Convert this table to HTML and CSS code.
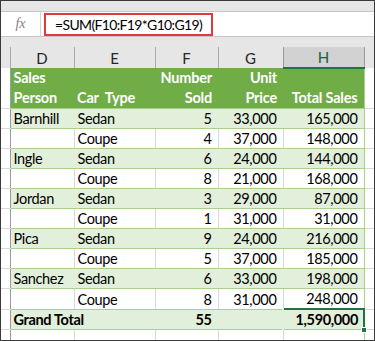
FILE: index.html
```html
<!DOCTYPE html>
<html lang="en">

<head>
    <meta charset="UTF-8">
    <meta name="viewport" content="width=device-width, initial-scale=1.0">
    <title>SUM of products</title>
    <link rel="stylesheet" href="styles.css">
</head>

<body>
    <div class="sheet">
        <div class="ribbon"></div>
        <div class="formula__bar">
            <span class="fx">fx</span>
            <div class="formula">=SUM(F10:F19*G10:G19)</div>
        </div>
        <div class="gap"></div>
        <table class="grid">
            <colgroup>
                <col class="c-gutter">
                <col class="c-d">
                <col class="c-e">
                <col class="c-f">
                <col class="c-g">
                <col class="c-h">
                <col class="c-rest">
            </colgroup>
            <thead>
                <tr class="letters">
                    <th class="gutter"></th>
                    <th>D</th>
                    <th>E</th>
                    <th>F</th>
                    <th>G</th>
                    <th class="selected">H</th>
                    <th class="rest"></th>
                </tr>
            </thead>
            <tbody>
                <tr class="head">
                    <td class="gutter"></td>
                    <td>Sales<br>Person</td>
                    <td class="bottom">Car&nbsp; Type</td>
                    <td class="num">Number<br>Sold</td>
                    <td class="num">Unit<br>Price</td>
                    <td class="num bottom">Total Sales</td>
                    <td class="rest"></td>
                </tr>
            </tbody>
            <tbody id="rows"></tbody>
            <tbody>
                <tr class="band total">
                    <td class="gutter"></td>
                    <td colspan="2">Grand Total</td>
                    <td class="num">55</td>
                    <td></td>
                    <td class="num active"><span class="handle"></span>1,590,000</td>
                    <td class="rest"></td>
                </tr>
                <tr class="empty">
                    <td class="gutter"></td>
                    <td></td>
                    <td></td>
                    <td></td>
                    <td></td>
                    <td></td>
                    <td class="rest"></td>
                </tr>
            </tbody>
        </table>
    </div>
    <script>
        // Sales data
const sales = [
  ['Barnhill', 'Sedan', 5, 33000],
  ['', 'Coupe', 4, 37000],
  ['Ingle', 'Sedan', 6, 24000],
  ['', 'Coupe', 8, 21000],
  ['Jordan', 'Sedan', 3, 29000],
  ['', 'Coupe', 1, 31000],
  ['Pica', 'Sedan', 9, 24000],
  ['', 'Coupe', 5, 37000],
  ['Sanchez', 'Sedan', 6, 33000],
  ['', 'Coupe', 8, 31000]
];

const rowsDOM = document.getElementById('rows');
const fmt = (n) => n.toLocaleString('en-US');

sales.forEach((row, i) => {
  const [person, car, sold, price] = row;
  const tr = document.createElement('tr');
  if (i % 2 === 0) tr.className = 'band';
  tr.innerHTML =
    '<td class="gutter"></td>' +
    '<td>' + person + '</td>' +
    '<td>' + car + '</td>' +
    '<td class="num">' + sold + '</td>' +
    '<td class="num">' + fmt(price) + '</td>' +
    '<td class="num">' + fmt(sold * price) + '</td>' +
    '<td class="rest"></td>';
  rowsDOM.appendChild(tr);
});
    </script>
</body>

</html>
```

FILE: styles.css
```css
* {
  margin: 0;
  padding: 0;
  box-sizing: border-box;
}

body {
  width: 375px;
  height: 341px;
  overflow: hidden;
  background-color: #ffffff;
  font-family: 'Lato', 'Liberation Sans', sans-serif;
}

.sheet {
  width: 375px;
  height: 341px;
  border: 1px solid #3a3a3a;
  overflow: hidden;
  background-color: #ffffff;
}

.ribbon {
  height: 11px;
  background-color: #e6e6e6;
  border-bottom: 1px solid #c6c6c6;
}

.formula__bar {
  height: 25px;
  display: flex;
  align-items: center;
  border-bottom: 1px solid #c6c6c6;
}

.fx {
  width: 40px;
  height: 100%;
  display: flex;
  align-items: center;
  justify-content: center;
  border-right: 1px solid #d4d4d4;
  font-family: 'Liberation Serif', serif;
  font-style: italic;
  font-size: 14px;
  color: #808080;
}

.formula {
  margin-left: 3px;
  width: 169px;
  height: 23px;
  border: 2px solid #e0393e;
  padding-left: 9px;
  font-size: 14px;
  letter-spacing: -0.65px;
  line-height: 19px;
  color: #000000;
}

.gap {
  height: 10px;
  background-color: #e6e6e6;
}

.grid {
  width: 373px;
  table-layout: fixed;
  border-collapse: collapse;
  font-size: 14.5px;
  letter-spacing: -0.35px;
  color: #000000;
}

.c-gutter { width: 9px; }
.c-d { width: 64px; }
.c-e { width: 81px; }
.c-f { width: 63px; }
.c-g { width: 65px; }
.c-h { width: 81px; }
.c-rest { width: 10px; }

.letters th {
  height: 21px;
  background-color: #e6e6e6;
  border-left: 1px solid #ababab;
  font-weight: normal;
  font-size: 15px;
  letter-spacing: 0;
  color: #262626;
  text-align: center;
  vertical-align: middle;
}

.letters th.gutter {
  border-left: none;
}

.letters th.selected {
  background-color: #d2d2d2;
  border-left: 1px solid #9b9b9b;
  border-right: 1px solid #9b9b9b;
  border-bottom: 2px solid #217346;
  color: #1d5e38;
}

.letters th.rest {
  border-left: none;
}

td {
  height: 20px;
  padding: 0 3px;
  white-space: nowrap;
  line-height: 19px;
  border-bottom: 1px solid #d9d9d9;
  border-left: 1px solid #d9d9d9;
  vertical-align: bottom;
}

td.num {
  text-align: right;
  padding-right: 6px;
}

td.gutter {
  border-left: none;
  border-right: 1px solid #9b9b9b;
  background-color: #ffffff;
}

td.rest {
  border-left: 1px solid #a9d08e;
}

.head td {
  height: 40px;
  background-color: #70ad47;
  color: #ffffff;
  font-weight: bold;
  letter-spacing: -0.2px;
  border-left: none;
  border-bottom: 1px solid #a9d08e;
  line-height: 20px;
  vertical-align: middle;
}

.head td.gutter {
  background-color: #ffffff;
  border-right: 1px solid #9b9b9b;
  border-bottom: 1px solid #d9d9d9;
}

.head td.rest {
  background-color: #ffffff;
  border-left: 1px solid #a9d08e;
  border-bottom: 1px solid #d9d9d9;
}

.head td.bottom {
  vertical-align: bottom;
}

#rows td:not(.gutter):not(.rest) {
  border-bottom: 1px solid #a9d08e;
}

.band td:not(.gutter):not(.rest) {
  background-color: #e2efda;
  border-left-color: #e2efda;
}

.band td:nth-child(2) {
  border-left-color: #9b9b9b;
}

.total td:not(.gutter):not(.rest) {
  font-weight: bold;
  border-bottom: 1px solid #a9d08e;
}

.total td.active {
  position: relative;
  border: 2px solid #217346;
  padding-right: 5px;
}

.handle {
  position: absolute;
  right: -4px;
  bottom: -4px;
  width: 6px;
  height: 6px;
  background-color: #217346;
  border: 1px solid #ffffff;
}

.empty td {
  height: 12px;
}
```
